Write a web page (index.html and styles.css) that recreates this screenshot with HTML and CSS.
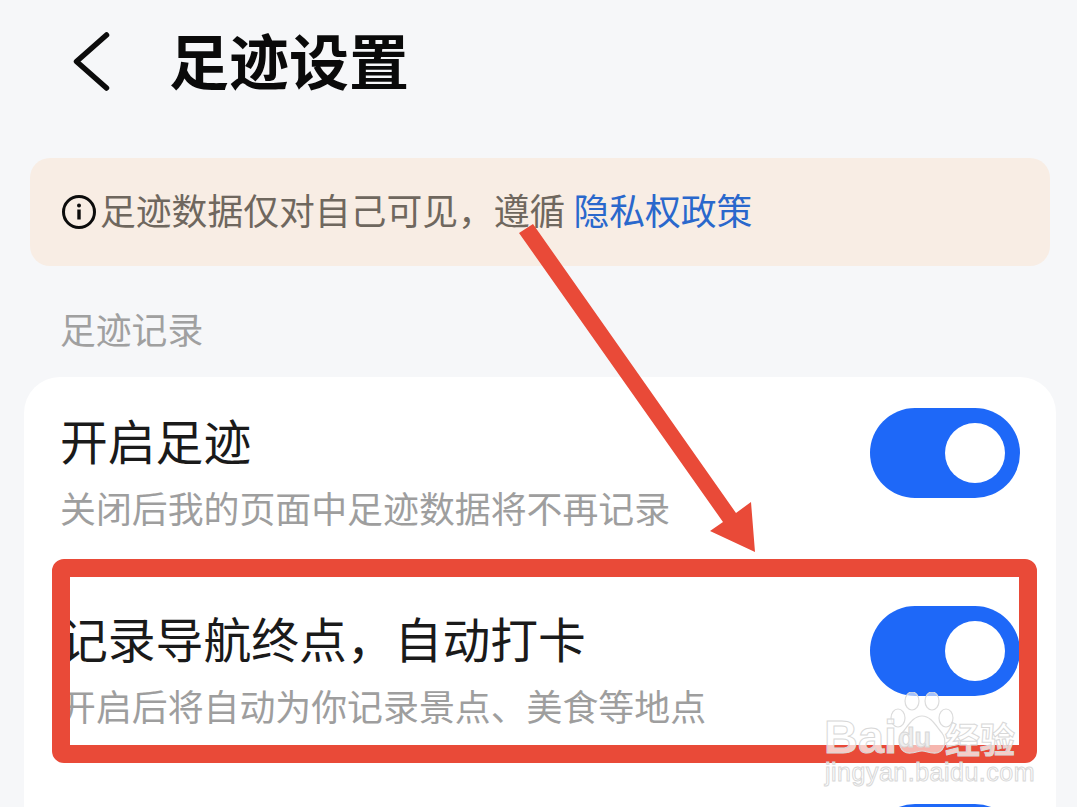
FILE: index.html
```html
<!DOCTYPE html>
<html lang="zh-CN">
<head>
<meta charset="utf-8">
<title>足迹设置</title>
<link rel="stylesheet" href="styles.css">
</head>
<body>
<div class="page">
  <header class="header">
    <svg class="back" viewBox="0 0 40 64" width="40" height="64"><path d="M34.500 5 L4.500 31.500 L34.500 58"/></svg>
    <h1 class="title">足迹设置</h1>
  </header>
  <div class="notice">
    <svg class="info" viewBox="0 0 36 36" width="36" height="36"><circle class="info-ring" cx="18" cy="18" r="15.500"/><circle class="info-dot" cx="18" cy="11.500" r="2"/><rect class="info-dot" x="16.300" y="15.500" width="3.400" height="10"/></svg>
    <p class="notice-text">足迹数据仅对自己可见，遵循 <a class="link">隐私权政策</a></p>
  </div>
  <div class="section-label">足迹记录</div>
  <section class="card">
    <div class="row">
      <div class="row-text">
        <div class="row-title">开启足迹</div>
        <div class="row-sub">关闭后我的页面中足迹数据将不再记录</div>
      </div>
      <div class="toggle"><span class="knob"></span></div>
    </div>
    <div class="row">
      <div class="row-text">
        <div class="row-title">记录导航终点，自动打卡</div>
        <div class="row-sub">开启后将自动为你记录景点、美食等地点</div>
      </div>
      <div class="toggle"><span class="knob"></span></div>
    </div>
    <div class="row">
      <div class="row-text"></div>
      <div class="toggle"><span class="knob"></span></div>
    </div>
  </section>

  <svg class="annotation" viewBox="0 0 1077 807" width="1077" height="807">
    <rect class="anno-box" x="61" y="568" width="967" height="186" rx="3"/>
    <polygon class="anno-arrow" points="519,233 533,224 736,513 751,502 755,552 710,531 723,522"/>
  </svg>

  <div class="watermark">
    <svg class="paw" viewBox="0 0 64 64" width="64" height="64">
      <ellipse cx="22" cy="9" rx="7" ry="9"/><ellipse cx="42" cy="9" rx="7" ry="9"/>
      <ellipse cx="8" cy="26" rx="7" ry="9"/><ellipse cx="56" cy="26" rx="7" ry="9"/>
      <path d="M32 24c-9 0-14 10-20 17-6 8-2 21 9 20 4 0 7-2 11-2s7 2 11 2c11 1 15-12 9-20-6-7-11-17-20-17z"/>
    </svg>
    <span class="wm-bai">Bai</span>
    <span class="wm-du">du</span>
    <span class="wm-cn">经验</span>
    <span class="wm-url">jingyan.baidu.com</span>
  </div>
</div>
</body>
</html>
```
FILE: styles.css
```css
* { box-sizing: border-box; }
html, body { margin: 0; padding: 0; }
body { font-family: "Noto Sans CJK SC", "Noto Sans", sans-serif; background: #f6f7f9; }
.page { position: relative; width: 1077px; height: 807px; overflow: hidden; background: #f6f7f9; }

.header { display: flex; align-items: center; height: 124px; padding-left: 72px; }
.back { flex: none; margin-right: 57px; }
.back path { fill: none; stroke: #0c0c0c; stroke-width: 5.5; stroke-linecap: round; stroke-linejoin: round; }
.title { margin: 0 0 6px; font-size: 60px; line-height: 70px; font-weight: 700; color: #0a0a0a; }

.notice { display: flex; align-items: center; height: 108px; margin: 34px 27px 0 30px; padding-left: 31px; background: #f8ede4; border-radius: 20px; }
.info { flex: none; margin-right: 3px; }
.info-ring { fill: none; stroke: #0c0c0c; stroke-width: 3; }
.info-dot { fill: #0c0c0c; }
.notice-text { margin: 0 0 6px; font-size: 35.800px; line-height: 44px; color: #6f675e; white-space: nowrap; }
.link { color: #2a68cc; }

.section-label { margin-top: 40px; padding-left: 60px; font-size: 35.800px; line-height: 44px; color: #a0a0a0; }

.card { margin: 27px 21px 0 24px; padding: 31px 36px 0 36px; background: #fff; border-radius: 36px 36px 0 0; }
.row { display: flex; justify-content: space-between; height: 198px; }
.row-text { padding-top: 4px; }
.row-title { font-size: 47.800px; line-height: 56px; color: #1a1a1a; white-space: nowrap; }
.row-sub { margin-top: 17px; font-size: 35.900px; line-height: 44px; color: #9e9e9e; white-space: nowrap; }
.toggle { flex: none; display: flex; align-items: center; justify-content: flex-end; width: 150px; height: 90px; padding-right: 15px; background: #1e68f8; border-radius: 45px; }
.knob { display: block; width: 60px; height: 60px; background: #fff; border-radius: 50%; }

.annotation { position: absolute; left: 0; top: 0; pointer-events: none; }
.anno-box { fill: none; stroke: #e94a38; stroke-width: 18; }
.anno-arrow { fill: #e94a38; }

.watermark { position: absolute; left: 820px; top: 690px; width: 205px; height: 95px; color: rgba(255, 255, 255, 0.72); }
.paw { position: absolute; left: 70px; top: 2px; fill: rgba(255, 255, 255, 0.6); stroke: #dcdcdc; stroke-width: 1.200; }
.wm-bai, .wm-du, .wm-cn, .wm-url { position: absolute; white-space: nowrap; -webkit-text-stroke: 1px #d8d8d8; }
.wm-bai { left: 4px; top: 22px; font: 700 47px/50px "Liberation Sans", sans-serif; }
.wm-du { left: 78px; top: 32px; font: 700 27px/32px "Liberation Sans", sans-serif; color: #eee; }
.wm-cn { left: 125px; top: 26px; font: 700 35px/44px "Noto Sans CJK SC", sans-serif; }
.wm-url { left: 5px; top: 69px; font: 400 25px/26px "Liberation Sans", sans-serif; letter-spacing: 0.500px; }
```
